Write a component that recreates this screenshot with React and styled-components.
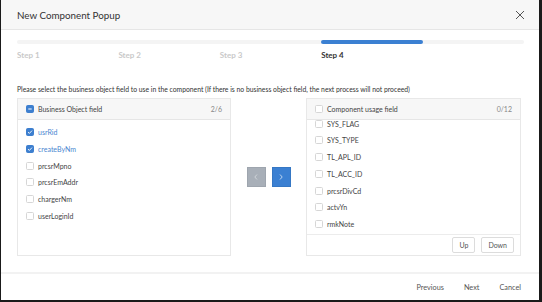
import React, { useLayoutEffect, useRef } from "react";
import styled, { createGlobalStyle } from "styled-components";

const Global = createGlobalStyle`
  html, body { margin: 0; padding: 0; background: #fff; }
  body { font-family: Lato, "Noto Sans", sans-serif; color: #333; }
  * { box-sizing: border-box; }
`;

const Frame = styled.div`
  width: 542px;
  height: 302px;
  border-left: 1px solid #1a1a1a;
  border-right: 3px solid #1a1a1a;
  border-bottom: 2px solid #1a1a1a;
  background: #fff;
  display: flex;
  flex-direction: column;
`;

const Header = styled.div`
  height: 30px;
  flex: none;
  background: #f7f7f7;
  border-bottom: 1px solid #e6e6e6;
  display: flex;
  align-items: center;
  justify-content: space-between;
  padding: 0 12px 0 16px;
`;

const Title = styled.div`
  font-size: 9.8px;
  color: #333;
`;

const Close = styled.button`
  border: 0;
  background: none;
  padding: 0;
  width: 14px;
  height: 14px;
  display: flex;
  align-items: center;
  justify-content: center;
  cursor: pointer;
`;

const Body = styled.div`
  flex: 1;
  padding: 10px 15px 0 16px;
  display: flex;
  flex-direction: column;
`;

const Track = styled.div`
  display: grid;
  grid-template-columns: repeat(5, 1fr);
  height: 4px;
  flex: none;
  background: #f4f4f4;
  border-radius: 2px;
`;

const Segment = styled.div`
  border-radius: 2px;
  background: ${(p) => (p.$active ? "#3b80d2" : "transparent")};
`;

const Labels = styled.div`
  display: grid;
  grid-template-columns: repeat(5, 1fr);
  margin-top: 6px;
  flex: none;
`;

const StepLabel = styled.div`
  font-size: 8px;
  line-height: 10px;
  font-weight: 700;
  color: ${(p) => (p.$active ? "#333" : "#c9c9c9")};
`;

const Hint = styled.div`
  margin-top: 25px;
  font-size: 6.8px;
  line-height: 8px;
  color: #333;
  white-space: nowrap;
  flex: none;
`;

const Row = styled.div`
  margin-top: 5px;
  display: flex;
  align-items: center;
  padding-right: 3px;
  flex: none;
`;

const Panel = styled.div`
  width: ${(p) => p.$w}px;
  height: 158px;
  flex: none;
  border: 1px solid #e8e8e8;
  display: flex;
  flex-direction: column;
  background: #fff;
`;

const PanelHead = styled.div`
  height: 21px;
  flex: none;
  background: #f7f7f7;
  border-bottom: 1px solid #e6e6e6;
  display: flex;
  align-items: center;
  padding: 0 8px;
  gap: 4px;
  font-size: 7px;
  color: #444;
`;

const Count = styled.span`
  margin-left: auto;
  color: #888;
`;

const List = styled.div`
  flex: 1;
  min-height: 0;
  padding: ${(p) => (p.$scroll ? "4px 8px 2px 8px" : "4px 8px")};
  overflow-y: ${(p) => (p.$scroll ? "auto" : "hidden")};
  &::-webkit-scrollbar { width: 4px; }
  &::-webkit-scrollbar-track { background: #fafafa; }
  &::-webkit-scrollbar-thumb { background: #d2d2d2; border-radius: 0; }
`;

const Item = styled.div`
  height: 16.7px;
  display: flex;
  align-items: center;
  gap: 4px;
  font-size: 7px;
  color: ${(p) => (p.$checked ? "#4a86d0" : "#444")};
`;

const Box = styled.span`
  width: 8px;
  height: 8px;
  flex: none;
  border-radius: 1.5px;
  border: 1px solid ${(p) => (p.$on ? "#3d7fcf" : "#d6d6d6")};
  background: ${(p) => (p.$on ? "#3d7fcf" : "#fff")};
  display: flex;
  align-items: center;
  justify-content: center;
`;

const Middle = styled.div`
  flex: 1;
  display: flex;
  justify-content: center;
  gap: 6px;
`;

const MoveBtn = styled.button`
  width: 19px;
  height: 20px;
  padding: 0;
  border: 1px solid ${(p) => (p.$primary ? "#3577c4" : "#9ea5ae")};
  background: ${(p) => (p.$primary ? "#3b80d2" : "#a8afb8")};
  display: flex;
  align-items: center;
  justify-content: center;
`;

const PanelFoot = styled.div`
  height: 21px;
  flex: none;
  border-top: 1px solid #ececec;
  display: flex;
  align-items: center;
  justify-content: flex-end;
  gap: 6px;
  padding: 0 6px;
`;

const SmallBtn = styled.button`
  height: 16px;
  padding: 0 6px;
  border: 1px solid #dcdcdc;
  border-radius: 2px;
  background: #fff;
  font-family: inherit;
  font-size: 7px;
  color: #555;
`;

const Footer = styled.div`
  height: 28px;
  flex: none;
  border-top: 2px solid #f2f2f2;
  display: flex;
  align-items: center;
  justify-content: flex-end;
  padding: 0 18px 0 0;
  gap: 20px;
`;

const FootBtn = styled.button`
  border: 0;
  background: none;
  padding: 0;
  font-family: inherit;
  font-size: 7.3px;
  color: #555;
`;

const Check = () => (
  <svg width="6" height="6" viewBox="0 0 6 6">
    <path d="M1 3.1 L2.4 4.4 L5 1.6" fill="none" stroke="#fff" strokeWidth="0.9" />
  </svg>
);

const Dash = () => (
  <svg width="6" height="6" viewBox="0 0 6 6">
    <path d="M1.3 3 H4.7" stroke="#fff" strokeWidth="1" />
  </svg>
);

const Chevron = ({ dir, color }) => (
  <svg width="6" height="8" viewBox="0 0 6 8">
    <path
      d={dir === "left" ? "M4 1.5 L1.8 4 L4 6.5" : "M2 1.5 L4.2 4 L2 6.5"}
      fill="none"
      stroke={color}
      strokeWidth="0.9"
    />
  </svg>
);

const leftItems = [
  { name: "usrRid", on: true },
  { name: "createByNm", on: true },
  { name: "prcsrMpno" },
  { name: "prcsrEmAddr" },
  { name: "chargerNm" },
  { name: "userLoginId" },
];

const rightItems = [
  "cmpnId",
  "rgstDt",
  "rgstId",
  "updtDt",
  "updtId",
  "SYS_FLAG",
  "SYS_TYPE",
  "TL_APL_ID",
  "TL_ACC_ID",
  "prcsrDivCd",
  "actvYn",
  "rmkNote",
];

export default function App() {
  const listRef = useRef(null);
  useLayoutEffect(() => {
    if (listRef.current) listRef.current.scrollTop = listRef.current.scrollHeight;
  }, []);
  const steps = ["Step 1", "Step 2", "Step 3", "Step 4", ""];
  return (
    <>
      <Global />
      <Frame>
        <Header>
          <Title>New Component Popup</Title>
          <Close aria-label="close">
            <svg width="10" height="10" viewBox="0 0 10 10">
              <path d="M1 1 L9 9 M9 1 L1 9" stroke="#555" strokeWidth="1" />
            </svg>
          </Close>
        </Header>
        <Body>
          <Track>
            {steps.map((s, i) => (
              <Segment key={i} $active={i === 3} />
            ))}
          </Track>
          <Labels>
            {steps.map((s, i) => (
              <StepLabel key={i} $active={i === 3}>
                {s}
              </StepLabel>
            ))}
          </Labels>
          <Hint>
            Please select the business object field to use in the component (If there is no
            business object field, the next process will not proceed)
          </Hint>
          <Row>
            <Panel $w={214}>
              <PanelHead>
                <Box $on>
                  <Dash />
                </Box>
                Business Object field
                <Count>2/6</Count>
              </PanelHead>
              <List>
                {leftItems.map((it) => (
                  <Item key={it.name} $checked={it.on}>
                    <Box $on={it.on}>{it.on && <Check />}</Box>
                    {it.name}
                  </Item>
                ))}
              </List>
            </Panel>
            <Middle>
              <MoveBtn aria-label="left">
                <Chevron dir="left" color="#d4d8dd" />
              </MoveBtn>
              <MoveBtn $primary aria-label="right">
                <Chevron dir="right" color="#c9dcf2" />
              </MoveBtn>
            </Middle>
            <Panel $w={215}>
              <PanelHead>
                <Box />
                Component usage field
                <Count>0/12</Count>
              </PanelHead>
              <List $scroll ref={listRef}>
                {rightItems.map((n) => (
                  <Item key={n}>
                    <Box />
                    {n}
                  </Item>
                ))}
              </List>
              <PanelFoot>
                <SmallBtn>Up</SmallBtn>
                <SmallBtn>Down</SmallBtn>
              </PanelFoot>
            </Panel>
          </Row>
        </Body>
        <Footer>
          <FootBtn>Previous</FootBtn>
          <FootBtn>Next</FootBtn>
          <FootBtn>Cancel</FootBtn>
        </Footer>
      </Frame>
    </>
  );
}
